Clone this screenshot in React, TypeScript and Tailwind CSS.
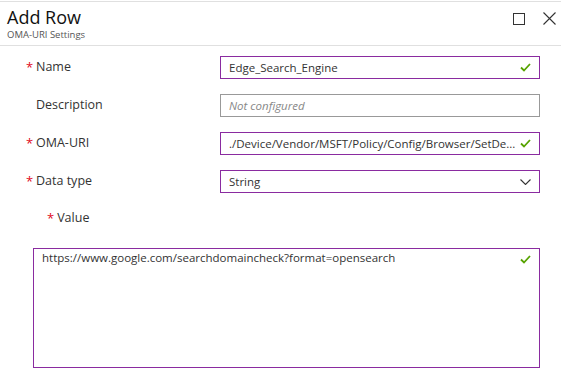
import React from 'react';

const font = { fontFamily: '"Open Sans", "Noto Sans", sans-serif' };

function Check() {
  return (
    <svg width="11" height="9" viewBox="0 0 11 9" className="shrink-0">
      <path d="M1 4.5 L4 7.5 L10 1" fill="none" stroke="#57a300" strokeWidth="1.8" />
    </svg>
  );
}

function Label({ text, required }: { text: string; required?: boolean }) {
  return (
    <div className="flex w-[194px] items-center text-[12.5px] text-[#333]">
      {required ? <span className="mr-[3px] w-[7px] text-[13px] leading-none text-[#e00b1c]">*</span> : <span className="w-[10px]" />}
      <span>{text}</span>
    </div>
  );
}

export default function App() {
  return (
    <div className="h-[379px] w-[561px] overflow-hidden bg-white text-[#333]" style={font}>
      <div className="relative mt-[1px] h-[45px] border-t border-b border-[#e0e0e0] pl-[7px]">
        <div className="pt-[3px] text-[18px] leading-[24px] text-[#111]">Add Row</div>
        <div className="text-[9.5px] leading-[12px] text-[#555]">OMA-URI Settings</div>
        <div className="absolute right-[5px] top-[10px] flex items-center gap-[18px]">
          <div className="h-[12px] w-[12px] border border-[#333]" />
          <svg width="13" height="13" viewBox="0 0 13 13">
            <path d="M0.5 0.5 L12.5 12.5 M12.5 0.5 L0.5 12.5" stroke="#333" strokeWidth="1.1" />
          </svg>
        </div>
      </div>

      <div className="flex flex-col gap-[15px] pl-[26px] pt-[10px]">
        <div className="flex h-[23px] items-center">
          <Label text="Name" required />
          <div className="flex h-[23px] w-[320px] items-center justify-between border border-[#8a2ba0] px-[8px] text-[11.5px]">
            <span>Edge_Search_Engine</span>
            <Check />
          </div>
        </div>
        <div className="flex h-[23px] items-center">
          <Label text="Description" />
          <div className="flex h-[23px] w-[320px] items-center border border-[#999] px-[8px] text-[11.5px] italic text-[#888]">
            Not configured
          </div>
        </div>
        <div className="flex h-[23px] items-center">
          <Label text="OMA-URI" required />
          <div className="flex h-[23px] w-[320px] items-center justify-between border border-[#8a2ba0] px-[8px] text-[11.5px]">
            <span className="whitespace-nowrap">./Device/Vendor/MSFT/Policy/Config/Browser/SetDe...</span>
            <Check />
          </div>
        </div>
        <div className="flex h-[23px] items-center">
          <Label text="Data type" required />
          <div className="flex h-[23px] w-[320px] items-center justify-between border border-[#8a2ba0] px-[8px] text-[11.5px]">
            <span>String</span>
            <svg width="11" height="6" viewBox="0 0 11 6">
              <path d="M0.5 0.5 L5.5 5.5 L10.5 0.5" fill="none" stroke="#333" strokeWidth="1.1" />
            </svg>
          </div>
        </div>
      </div>

      <div className="mt-[16px] flex items-center pl-[47px] text-[12.5px]">
        <span className="mr-[3px] text-[13px] text-[#e00b1c]">*</span>
        <span>Value</span>
      </div>

      <div className="ml-[33px] mt-[19px] flex h-[120px] w-[507px] items-start justify-between border border-[#8a2ba0] px-[8px] text-[11.5px]">
        <span>https://www.google.com/searchdomaincheck?format=opensearch</span>
        <div className="pt-[6px]"><Check /></div>
      </div>
    </div>
  );
}
